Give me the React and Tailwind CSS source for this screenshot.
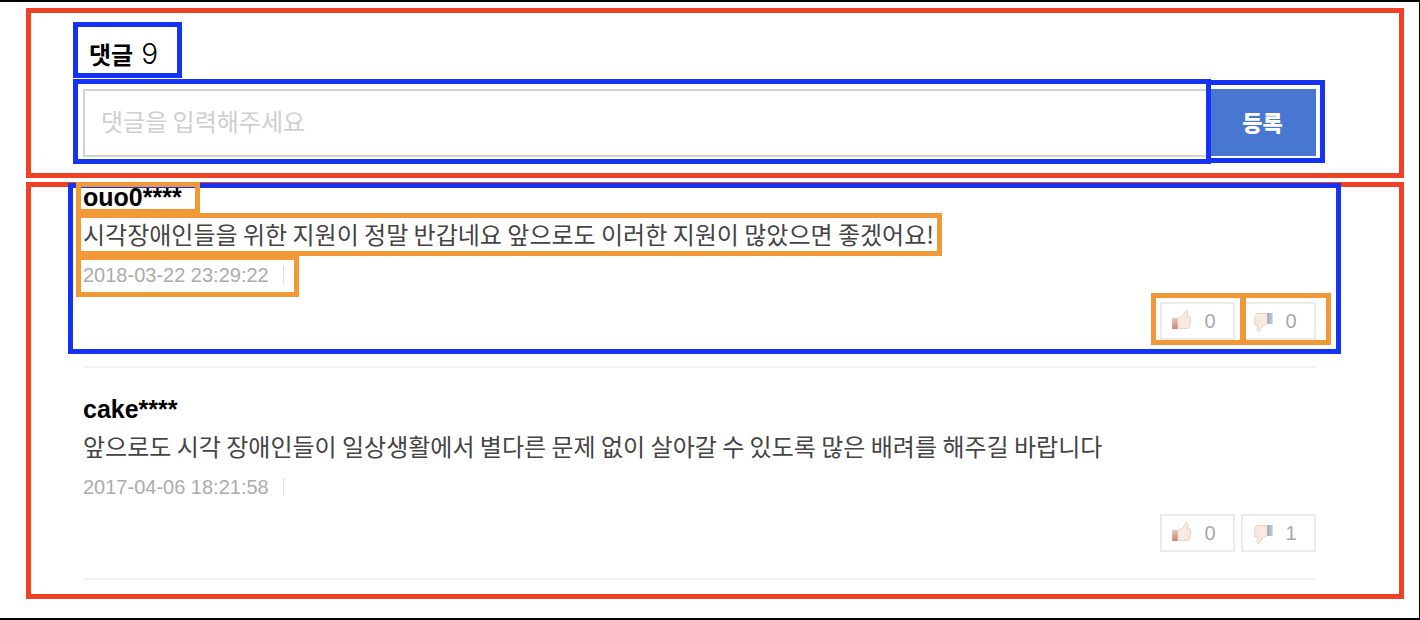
import { useState } from "react";

const COMMENTS = [
  {
    id: 1,
    author: "ouo0****",
    text: "시각장애인들을 위한 지원이 정말 반갑네요 앞으로도 이러한 지원이 많았으면 좋겠어요!",
    date: "2018-03-22 23:29:22",
    up: 0,
    down: 0,
    outlined: true,
  },
  {
    id: 2,
    author: "cake****",
    text: "앞으로도 시각 장애인들이 일상생활에서 별다른 문제 없이 살아갈 수 있도록 많은 배려를 해주길 바랍니다",
    date: "2017-04-06 18:21:58",
    up: 0,
    down: 1,
    outlined: false,
  },
];

function Hand() {
  return (
    <>
      <path
        d="M5.5 9.2 C8.6 8.6 11 6.8 12.2 4.6 C13 3.1 13.3 1.8 14.3 1.6 C15.7 1.5 16 2.8 15.8 4.2 L15.1 7.7 L18 8.1 C18.9 8.4 18.9 9.8 18.5 10.6 C18.8 11.6 18.7 12.9 18.3 13.6 C18.5 14.7 18.2 15.8 17.7 16.3 C17.7 17.7 17.2 19.1 15.8 19.4 C12.4 19.7 8.6 19.5 5.5 19 Z"
        fill="#f8eae0"
        stroke="#e8ccb8"
        strokeWidth="0.9"
        strokeLinejoin="round"
      />
      <path d="M15.6 10.7H18.3M15.6 13.6H18M15.2 16.4H17.4" stroke="#efdacb" strokeWidth="0.6" />
    </>
  );
}

function ThumbUp() {
  return (
    <svg viewBox="0 0 20 24" className="h-6 w-5 shrink-0" aria-hidden="true">
      <defs>
        <linearGradient id="cuffRed" x1="0" y1="0" x2="0" y2="1">
          <stop offset="0" stopColor="#ecc4b8" />
          <stop offset="1" stopColor="#cf7e74" />
        </linearGradient>
      </defs>
      <Hand />
      <path d="M0.2 8.8 L5.6 9.2 V20 H0.2 Z" fill="url(#cuffRed)" />
    </svg>
  );
}

function ThumbDown() {
  return (
    <svg viewBox="0 0 20 24" className="h-6 w-5 shrink-0" aria-hidden="true">
      <defs>
        <linearGradient id="cuffBlue" x1="0" y1="0" x2="1" y2="0">
          <stop offset="0" stopColor="#9da8b6" />
          <stop offset="1" stopColor="#c5ccd5" />
        </linearGradient>
      </defs>
      <g transform="rotate(180 10 12)">
        <Hand />
      </g>
      <path d="M14.2 4 H19.7 V15.2 L14.2 14.8 Z" fill="url(#cuffBlue)" />
    </svg>
  );
}

function VoteButton({ label, icon, initial, frame }) {
  const [voted, setVoted] = useState(false);
  return (
    <div className="relative">
      <button
        type="button"
        aria-label={label}
        onClick={() => setVoted(!voted)}
        className="flex h-[38px] w-[75px] cursor-pointer items-center border-2 border-[#ebebeb] pl-[10px] text-xl text-[#a8a8a8]"
      >
        {icon}
        <span className="w-9 text-center">{initial + (voted ? 1 : 0)}</span>
      </button>
      {frame && <span className={"pointer-events-none absolute border-5 border-[#f19937] " + frame} />}
    </div>
  );
}

function Comment({ comment }) {
  const { author, text, date, up, down, outlined } = comment;
  const orange = outlined ? "border-[#f19937]" : "border-transparent";
  return (
    <li>
      <article className={"border-5 pb-[9px] " + (outlined ? "border-[#1433f5]" : "border-transparent")}>
        <div className="-mt-[6px] flex flex-col items-start pl-[3px]">
          <h3 className={"relative border-5 pr-[13px] pb-[2px] pl-[2px] text-[25px] leading-5 font-bold text-black " + orange}>
            {author}
          </h3>
          <p
            className={
              "-mt-px border-5 pr-[3px] pb-[2px] pl-[2px] font-['Noto_Sans_CJK_KR',sans-serif] text-2xl leading-[31px] text-[#444] " +
              orange
            }
          >
            {text}
          </p>
          <div className={"-mt-px flex items-center border-5 pr-[10px] pb-[2px] pl-[2px] " + orange}>
            <time className="text-xl leading-[30px] text-[#acacac]">{date}</time>
            <span className="ml-[14px] h-[18px] w-px bg-[#dedede]" />
          </div>
        </div>
        <div className="mt-[5px] flex justify-end gap-[6px] pr-5">
          <VoteButton
            label="좋아요"
            icon={<ThumbUp />}
            initial={up}
            frame={outlined && "-top-[9px] -right-[10px] -bottom-[5px] -left-[9px]"}
          />
          <VoteButton
            label="싫어요"
            icon={<ThumbDown />}
            initial={down}
            frame={outlined && "-top-[9px] -right-[15px] -bottom-[5px] left-0"}
          />
        </div>
      </article>
      <hr className="mt-3 mr-[25px] ml-[15px] border-t-2 border-[#f3f3f3]" />
    </li>
  );
}

export default function App() {
  const [value, setValue] = useState("");
  return (
    <main className="flex flex-col gap-1 border-t-2 border-r border-b-2 border-black bg-white pt-[6px] pr-[15px] pb-[19px] pl-[26px] font-['Liberation_Sans','Noto_Sans_CJK_KR',sans-serif]">
      <section className="border-5 border-[#ee4125] pt-[9px] pr-[74px] pb-[9px] pl-[42px]">
        <h2 className="flex h-14 w-[109px] items-center gap-2 border-5 border-[#1433f5] pt-[7px] pl-[11px] leading-8 text-black">
          <span className="font-['Noto_Sans_CJK_KR',sans-serif] text-2xl leading-8 font-bold">댓글</span>
          <span className="font-['Inter',sans-serif] text-[28px] leading-8 font-light">9</span>
        </h2>
        <form className="mt-px flex items-center" onSubmit={(e) => e.preventDefault()}>
          <div className="flex-1 border-5 border-[#1433f5] pt-[5px] pb-[2px] pl-[5px]">
            <input
              type="text"
              aria-label="댓글"
              value={value}
              onChange={(e) => setValue(e.target.value)}
              placeholder="댓글을 입력해주세요"
              className="block h-[68px] w-full border-2 border-r-0 border-[#d2d2d2] px-4 pb-[6px] font-['Noto_Sans_CJK_KR',sans-serif] text-2xl outline-none placeholder:text-[#cfcfcf]"
            />
          </div>
          <div className="-ml-[5px] border-5 border-[#1433f5] pt-1 pr-1 pb-[2px]">
            <button
              type="submit"
              className="block h-[67px] w-[105px] cursor-pointer bg-[#4877d2] pr-[2px] pb-[3px] font-['Noto_Sans_CJK_KR',sans-serif] text-[22px] font-black text-white"
            >
              등록
            </button>
          </div>
        </form>
      </section>
      <section className="border-5 border-[#ee4125] pr-[58px] pb-[14px] pl-[37px]">
        <ul className="-mt-1 flex flex-col gap-[27px]">
          {COMMENTS.map((c) => (
            <Comment key={c.id} comment={c} />
          ))}
        </ul>
      </section>
    </main>
  );
}
